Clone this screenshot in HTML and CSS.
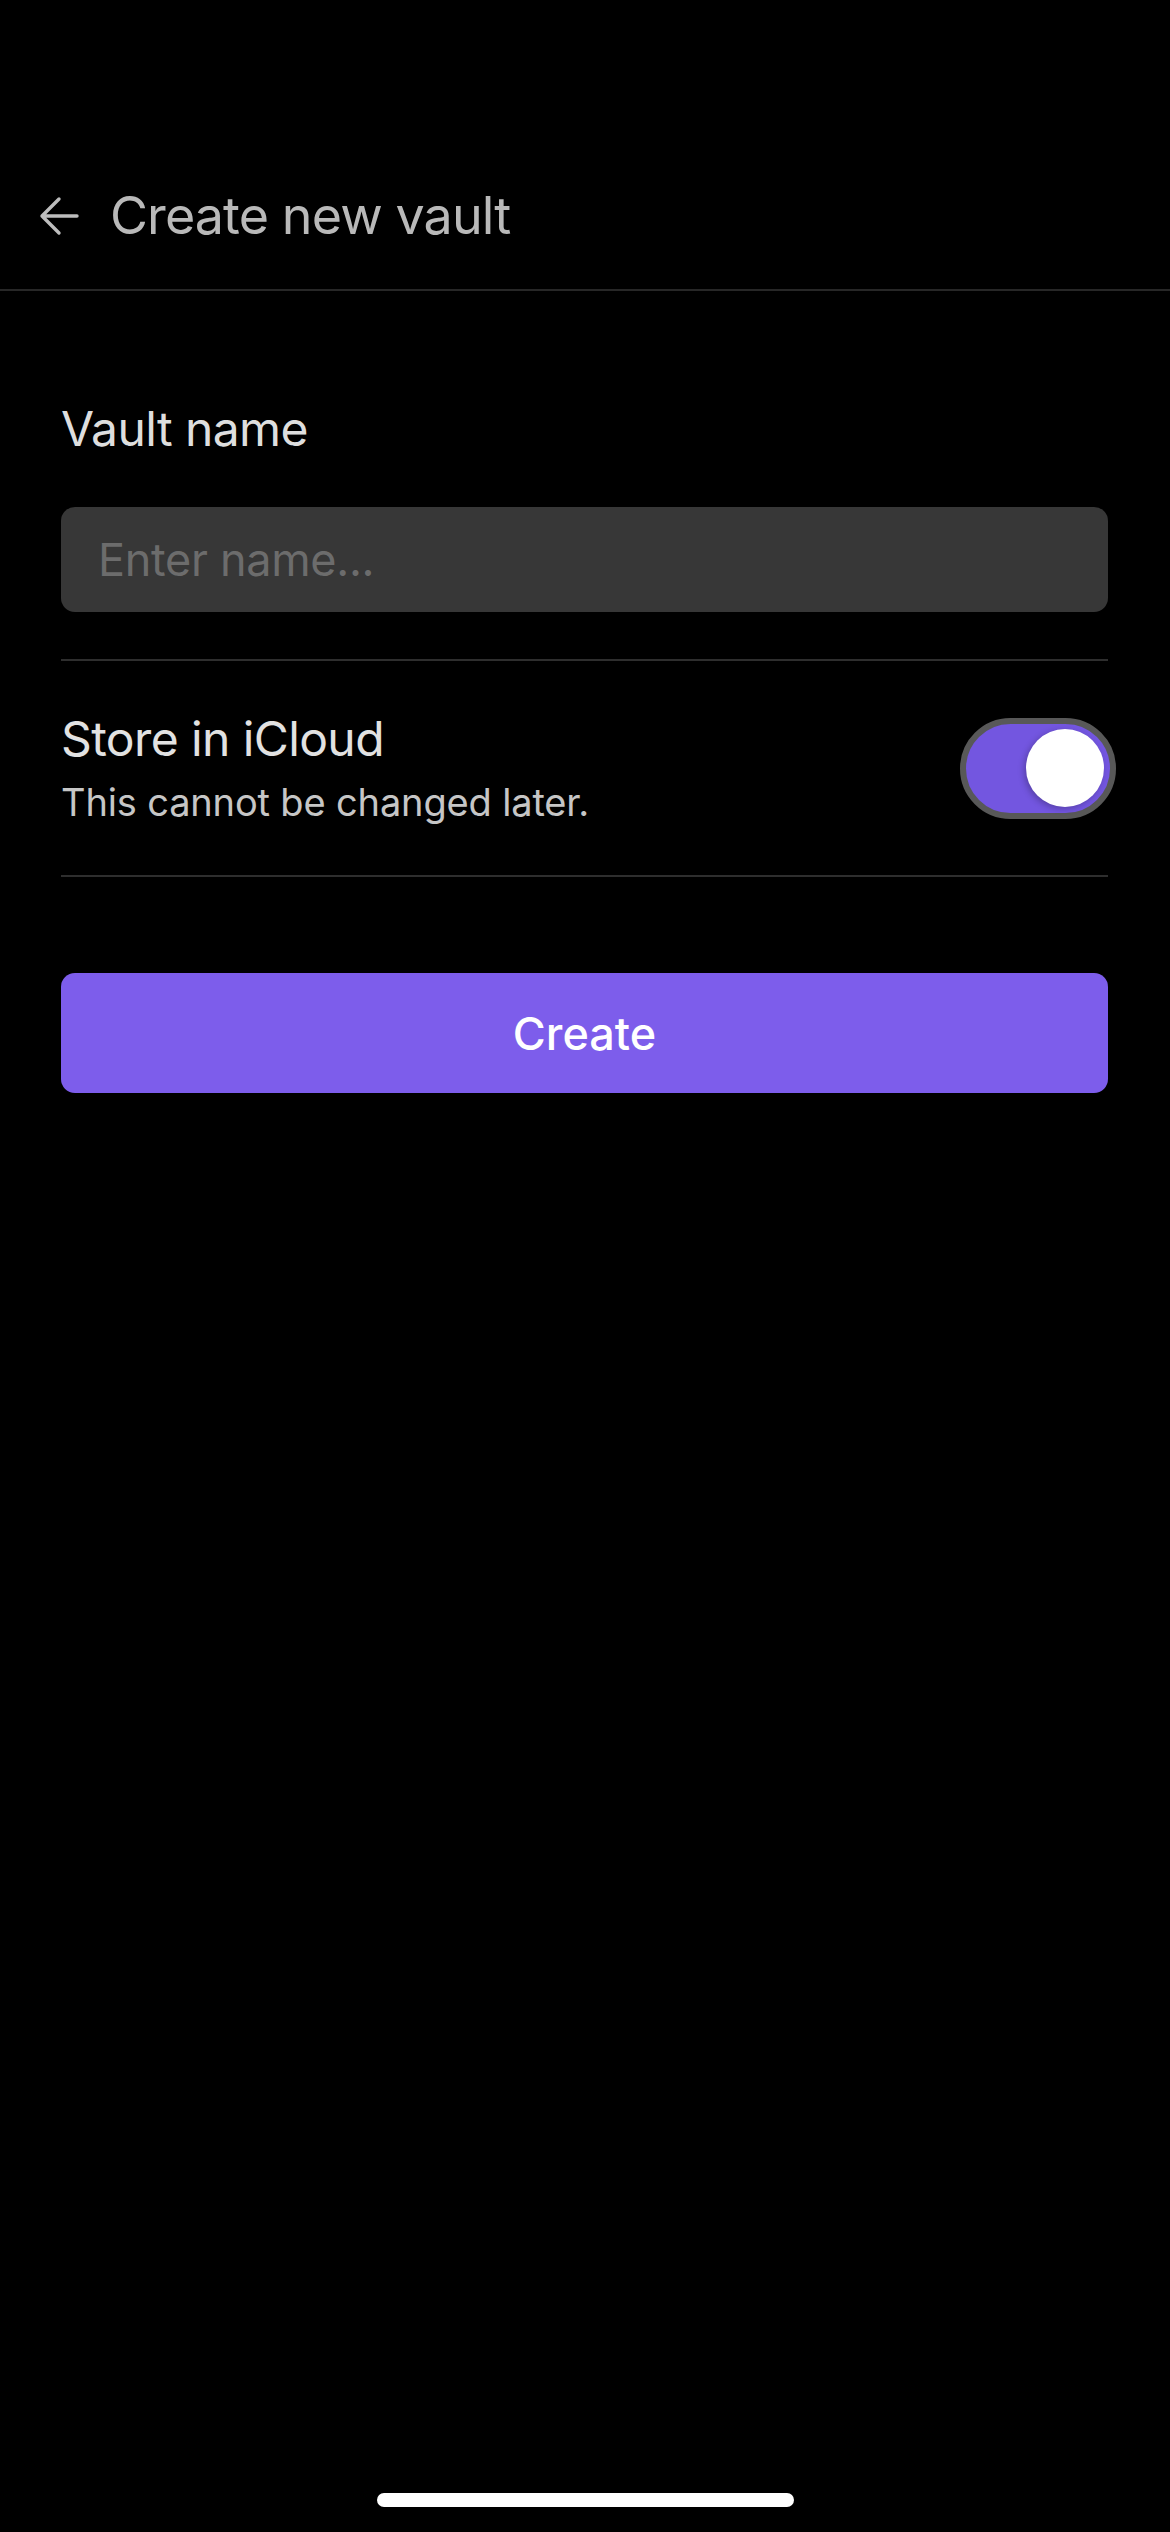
FILE: index.html
```html
<!DOCTYPE html>
<html lang="en">
<head>
<meta charset="utf-8">
<title>Create new vault</title>
<link rel="stylesheet" href="styles.css">
</head>
<body>
<div class="screen">
  <header class="topbar">
    <div class="topbar-row">
      <svg class="back" viewBox="0 0 40 40" width="40" height="40" aria-hidden="true">
        <path d="M38 20H3M20 3L3 20L20 37" fill="none" stroke="#bdbdbd" stroke-width="3.4" stroke-linecap="round" stroke-linejoin="round"/>
      </svg>
      <h1 class="title">Create new vault</h1>
    </div>
  </header>
  <main class="content">
    <label class="field-label" for="vname">Vault name</label>
    <input id="vname" class="text-input" type="text" placeholder="Enter name...">
    <div class="setting">
      <div class="setting-text">
        <div class="setting-name">Store in iCloud</div>
        <div class="setting-desc">This cannot be changed later.</div>
      </div>
      <div class="toggle"><div class="knob"></div></div>
    </div>
    <button class="create-btn" type="button">Create</button>
  </main>
  <div class="home-indicator"></div>
</div>
</body>
</html>
```

FILE: styles.css
```css
* { box-sizing: border-box; }
html, body {
  margin: 0;
  padding: 0;
  background: #000;
}
body {
  font-family: "Inter", "Roboto", "Liberation Sans", sans-serif;
  color: #dcdcdc;
}
.screen {
  min-height: 2532px;
  display: flex;
  flex-direction: column;
}
.topbar {
  height: 291px;
  padding-top: 176px;
  border-bottom: 2px solid #272727;
}
.topbar-row {
  height: 80px;
  display: flex;
  align-items: center;
  padding-left: 39px;
}
.back {
  display: block;
  flex: none;
  margin-right: 31px;
}
.title {
  margin: 0;
  font-size: 52px;
  line-height: 80px;
  font-weight: 400;
  color: #b9b9b9;
  letter-spacing: -0.9px;
}
.content {
  padding: 109px 62px 0 61px;
  display: flex;
  flex-direction: column;
}
.field-label {
  font-size: 48px;
  line-height: 58px;
  color: #dedede;
  letter-spacing: -0.6px;
}
.text-input {
  margin-top: 49px;
  height: 105px;
  width: 100%;
  border: none;
  outline: none;
  border-radius: 14px;
  background: #373737;
  padding: 0 37px;
  font-family: inherit;
  font-size: 45px;
  letter-spacing: -0.3px;
  color: #e0e0e0;
}
.text-input::placeholder {
  color: #6c6c6c;
}
.setting {
  margin-top: 47px;
  border-top: 2px solid #2e2e2e;
  border-bottom: 2px solid #2e2e2e;
  padding: 49px 0;
  display: flex;
  align-items: center;
  justify-content: space-between;
}
.setting-name {
  font-size: 48px;
  line-height: 58px;
  color: #e2e2e2;
  letter-spacing: -0.6px;
}
.setting-desc {
  margin-top: 10px;
  font-size: 38px;
  line-height: 48px;
  color: #c6c6c6;
  letter-spacing: -0.15px;
}
.toggle {
  flex: none;
  width: 156px;
  height: 101px;
  margin-right: -8px;
  border: 6px solid #585858;
  border-radius: 51px;
  background: #7356e0;
  display: flex;
  align-items: center;
  justify-content: flex-end;
  padding-right: 6px;
}
.knob {
  width: 78px;
  height: 78px;
  border-radius: 50%;
  background: #fff;
  box-shadow: -2px 2px 6px rgba(0,0,0,0.25);
}
.create-btn {
  margin-top: 96px;
  height: 120px;
  width: 100%;
  border: none;
  border-radius: 14px;
  background: #7d5deb;
  color: #fff;
  font-family: inherit;
  font-size: 45px;
  font-weight: 500;
}
.home-indicator {
  margin: auto auto 25px;
  width: 417px;
  height: 14px;
  border-radius: 7px;
  background: #fff;
}
```
